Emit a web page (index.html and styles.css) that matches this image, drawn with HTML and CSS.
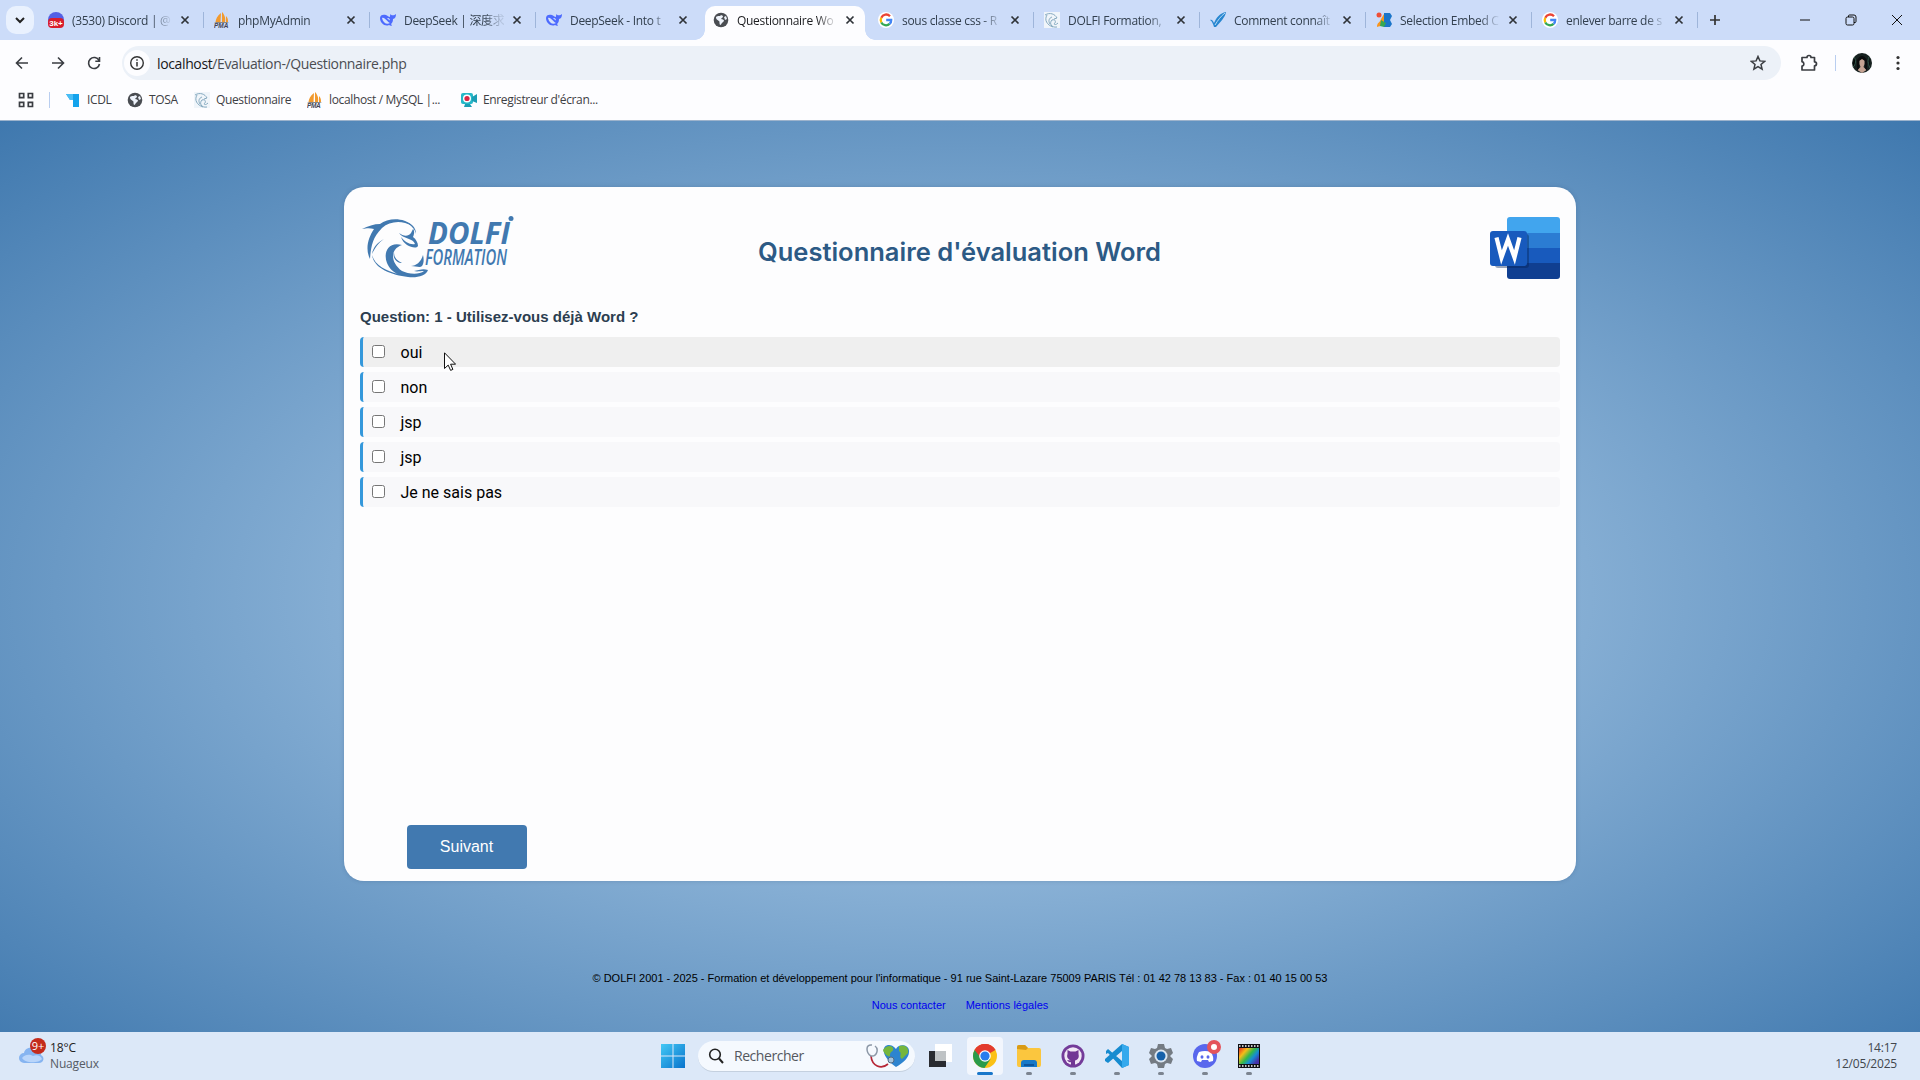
FILE: index.html
```html
<!DOCTYPE html>
<html lang="fr">
<head>
<meta charset="utf-8">
<title>Questionnaire Word</title>
<link rel="stylesheet" href="styles.css">
</head>
<body>
<svg class="defs" width="0" height="0">
  <defs>
    <symbol id="x" viewBox="0 0 10 10"><path d="M1.5 1.5l7 7M8.5 1.5l-7 7" stroke="currentColor" stroke-width="1.7"/></symbol>
    <symbol id="pma" viewBox="0 0 16 16"><path d="M7 1C3 4 2 7 1.500 10h5zM8 0v10h3C12 6 10 2 8 0zM12 4c2 2 2 4 2 6h-2z" fill="#f29a2e"/><path d="M0 10h15l-2 1H2z" fill="#888"/><text x="0" y="16" font-family="Liberation Sans" font-size="6.500" font-weight="700" font-style="italic" fill="#445">PMA</text></symbol>
    <symbol id="whale" viewBox="0 0 16 16"><path d="M0 6c0-3 3-4 6-3 2 1 3 2 4 2 0-1 0-2 .5-3 .5 1 1.500 1.500 2.500 1.300 1 0 2-.3 3-1.300 0 3-1 4.500-3 5 0 3-1 4-2 5l1 1.500c-1 .5-2 .2-3-.5C5 15 0 11 0 6z" fill="#4d6bfe"/><path d="M2 6c3-1 5 4 8 5-3 2-7 0-8-5zM7 6c2-.5 3 1 3 2.500C9 8 8 7 7 6z" fill="#d5e2fb"/></symbol>
    <symbol id="globe" viewBox="0 0 16 16"><circle cx="8" cy="8" r="7.300" fill="#4a4d52"/><path d="M3 5c2-2 4 0 5-2l2 1c0 2-2 2-2 3 2 0 3 1 3 2l-2 2c-1 1-1 2-2 2-1-2 0-3-1-4S3 8 3 5zM11 5l2-1 1 3-2 1z" fill="#eef3fb"/></symbol>
    <symbol id="google" viewBox="0 0 16 16"><circle cx="8" cy="8" r="8" fill="#fff"/><g fill="none" stroke-width="2.300"><path d="M12 4.200A5.300 5.300 0 0 0 3.300 5.700" stroke="#ea4335"/><path d="M3.300 5.700a5.300 5.300 0 0 0 0 4.700" stroke="#fbbc05"/><path d="M3.300 10.400a5.300 5.300 0 0 0 8.300 1.500" stroke="#34a853"/><path d="M11.600 11.900A5 5 0 0 0 13.200 8H8.200" stroke="#4285f4"/></g></symbol>
    <symbol id="dolfin" viewBox="0 0 16 16"><path d="M0 0h16v16H0z" fill="#f0f5fa"/><path d="M1 3c5-3 10-1 12 3l-3 1M3 3c-3 5 0 10 6 12M13 15c-6 1-8-4-5-7 3-1 4 1 3 3-2 1 0 3 3 0M6 12c-2-3-1-6 2-7" fill="none" stroke="#85a9bf"/></symbol>
  </defs>
</svg>

<header class="browser">
  <div class="tabstrip">
    <div class="tabsearch"><svg width="10" height="8" viewBox="0 0 10 8"><path d="M1 2l4 4 4-4" fill="none" stroke="#222" stroke-width="2"/></svg></div>
    <div class="tab"><svg class="fav" viewBox="0 0 16 16"><circle cx="8" cy="8" r="8" fill="#5360e5"/><rect y="6" width="16" height="10" rx="4" fill="#d91d2c"/><text x="8" y="14" text-anchor="middle" font-family="Liberation Sans" font-size="8" font-weight="700" fill="#fff">3k+</text></svg><span>(3530) Discord | @</span><svg class="close"><use href="#x"/></svg></div>
    <div class="tab"><svg class="fav"><use href="#pma"/></svg><span>phpMyAdmin</span><svg class="close"><use href="#x"/></svg></div>
    <div class="tab"><svg class="fav"><use href="#whale"/></svg><span>DeepSeek | 深度求</span><svg class="close"><use href="#x"/></svg></div>
    <div class="tab noline"><svg class="fav"><use href="#whale"/></svg><span>DeepSeek - Into t</span><svg class="close"><use href="#x"/></svg></div>
    <div class="tab active noline"><svg class="fav"><use href="#globe"/></svg><span>Questionnaire Wo</span><svg class="close"><use href="#x"/></svg></div>
    <div class="tab"><svg class="fav"><use href="#google"/></svg><span>sous classe css - R</span><svg class="close"><use href="#x"/></svg></div>
    <div class="tab"><svg class="fav"><use href="#dolfin"/></svg><span>DOLFI Formation,</span><svg class="close"><use href="#x"/></svg></div>
    <div class="tab"><svg class="fav" viewBox="0 0 16 16"><path d="M0 8c2-1 3 1 4 3C6 6 10 1 16 0c-1 6-6 10-10 15H4C3 12 2 9 0 8z" fill="#2786d0"/><path d="M5 13C8 8 11 4 15 1" stroke="#b8dcf5" fill="none"/></svg><span>Comment connaît</span><svg class="close"><use href="#x"/></svg></div>
    <div class="tab"><svg class="fav" viewBox="0 0 16 16"><circle cx="3" cy="3" r="2.500" fill="#ef4e36"/><path d="M1 15c0-5 3-4 4-8l3-5v7c0 4-3 5-7 6z" fill="#f8951d"/><path d="M8 1h6l2 3-2 4 2 4-2 3H8z" fill="#1b75c9"/><path d="M5 8l5 3-2 4-4-1z" fill="#36a852"/></svg><span>Selection Embed C</span><svg class="close"><use href="#x"/></svg></div>
    <div class="tab"><svg class="fav"><use href="#google"/></svg><span>enlever barre de s</span><svg class="close"><use href="#x"/></svg></div>
    <svg class="newtab" viewBox="0 0 12 12"><path d="M6 1v10M1 6h10" stroke="#333" stroke-width="1.700"/></svg>
    <div class="window-buttons">
      <svg viewBox="0 0 12 12"><path d="M1 6h10" stroke="#111"/></svg>
      <svg viewBox="0 0 12 12"><path d="M3.500 3V2q0-1 1-1H9q2 0 2 2v4.500q0 1-1 1H9" fill="none" stroke="#111"/><rect x="1" y="3" width="8" height="8" rx="1.500" fill="none" stroke="#111"/></svg>
      <svg viewBox="0 0 12 12"><path d="M1 1l10 10M11 1L1 11" stroke="#111"/></svg>
    </div>
  </div>
  <div class="toolbar">
    <svg class="nav" viewBox="0 0 16 16"><path d="M14 8H3M8 2.500L2.500 8 8 13.500" /></svg>
    <svg class="nav" viewBox="0 0 16 16"><path d="M2 8h11M8 2.500L13.500 8 8 13.500"/></svg>
    <svg class="nav" viewBox="0 0 16 16"><path d="M13 5.500A5.500 5.500 0 1 0 13.500 9M13.500 2v4.200H9.300"/></svg>
    <div class="url">
      <div class="info"><svg width="16" height="16" viewBox="0 0 16 16"><circle cx="8" cy="8" r="6.300" fill="none" stroke="#333" stroke-width="1.400"/><path d="M8 7v4.500M8 4.300v1.500" stroke="#333" stroke-width="1.500"/></svg></div>
      <p><b>localhost</b>/Evaluation-/Questionnaire.php</p>
      <svg class="star" viewBox="0 0 16 16"><path d="M8 1.500l1.900 4.400 4.800.4L11 9.500l1.100 4.700L8 11.700l-4.100 2.500L5 9.500 1.300 6.300l4.800-.4z" fill="none" stroke="#3a3d42" stroke-width="1.500"/></svg>
    </div>
    <svg class="puzzle" viewBox="0 0 18 18"><path d="M2 3.500h5a2 2 0 0 1 4 0h3.500v4.300a2 2 0 0 1 0 4V16H2v-3.800c2.500-.5 2.500-4 0-4.500z" fill="none" stroke="#3a3d42" stroke-width="1.700" stroke-linejoin="round"/></svg>
    <i class="vline"></i>
    <svg class="avatar" viewBox="0 0 20 20"><circle cx="10" cy="10" r="10" fill="#172120"/><path d="M1 14c3-2 3-8 1-10M17 4c-2 4 0 9 1 11" stroke="#32574a"/><path d="M7.500 7q2.500-3 5 0v4l-1 3 3 3-4.500 3-4.500-3 3-3-1-3z" fill="#c5a393"/><path d="M5 18V7q5-8 10 0v11l-2-3V8l-3-2-3 2v7z" fill="#0c0d0e"/></svg>
    <svg class="dots" viewBox="0 0 4 16"><g fill="#333"><circle cx="2" cy="2.500" r="1.600"/><circle cx="2" cy="8" r="1.600"/><circle cx="2" cy="13.500" r="1.600"/></g></svg>
  </div>
  <nav class="bookmarks">
    <svg class="apps" viewBox="0 0 16 16"><g fill="none" stroke="#3a3d42" stroke-width="1.700"><path d="M1.500 1.500h4.200v4.200H1.500zM10.300 1.500h4.200v4.200h-4.200zM1.500 10.300h4.200v4.200H1.500zM10.300 10.300h4.200v4.200h-4.200z"/></g></svg>
    <i></i>
    <a class="b1"><svg viewBox="0 0 16 16"><path d="M1 2h13v13H8V8H5z" fill="#14a3ec"/><path d="M1 2h7v6H5z" fill="#49bdf5"/></svg><span>ICDL</span></a>
    <a class="b2"><svg><use href="#globe"/></svg><span>TOSA</span></a>
    <a class="b3"><svg><use href="#dolfin"/></svg><span>Questionnaire</span></a>
    <a class="b4"><svg><use href="#pma"/></svg><span>localhost / MySQL |...</span></a>
    <a class="b5"><svg viewBox="0 0 16 16"><rect y="1" width="12" height="11" rx="2" fill="#25b8c8"/><path d="M11 5l5-3v9l-5-2zM4 12h5l2 3H3z" fill="#1b9db4"/><circle cx="6" cy="6.500" r="4" fill="#fff"/><circle cx="6" cy="6.500" r="2.600" fill="#da2645"/></svg><span>Enregistreur d'écran...</span></a>
  </nav>
</header>

<main class="page">
  <section class="card">
    <div class="card-head">
      <svg class="logo" viewBox="0 0 154 66">
        <g fill="#4179b0">
          <path d="M0 14C6 11 12 9 18 9 26 3 42 2 50 11 40 5 28 6 20 13 10 23 9 32 8 44 3 34 6 23 12 14 8 13 5 13 0 14z"/>
          <path d="M10 40c2 14 20 20 36 22 9 1 18-1 20-7-5-2-9 0-14 1 3 1 6 0 10 0-5 4-16 3-22 0C28 47 28 34 40 30 26 26 21 38 25 48c2 5 6 9 11 11C25 56 13 51 10 40z"/>
          <path d="M37 18c4 3 9 4 12 0l2-4c2 2 1 6 0 8 3 2 5 6 5 9-2 3-7 1-11-1-3-2-5-5-6-8 4 5 9 8 14 7-2-6-12-5-16-11z"/>
          <path d="M61 40c-2 7-7 11-12 11 5 0 9 2 11 0 2-3 2-7 1-11zM32 37c0 5 2 8 8 11-5 0-10-5-8-11z"/>
          <path d="M22 24c-6 3-11 8-12 15 3-6 6-11 12-15zM42 6c8 2 12 7 12 13-1-5-5-9-12-13z"/>
        </g>
        <g fill="#4179b0" font-family="Open Sans, sans-serif" font-style="italic">
          <text x="66" y="29" font-size="30" font-weight="700" textLength="82" lengthAdjust="spacingAndGlyphs">DOLFI</text>
          <text x="63" y="50" font-size="22" font-weight="600" textLength="82" lengthAdjust="spacingAndGlyphs">FORMATION</text>
        </g>
        <circle cx="149" cy="3.500" r="2.500" fill="#4179b0"/>
      </svg>
      <h1><svg width="404" height="40" viewBox="0 0 404 40"><text x="0" y="29" textLength="403" lengthAdjust="spacingAndGlyphs">Questionnaire d'évaluation Word</text></svg></h1>
      <svg class="word" viewBox="0 0 70 62">
        <clipPath id="doc"><rect x="17" width="53" height="62" rx="3"/></clipPath>
        <g clip-path="url(#doc)"><path d="M17 0h53v16H17z" fill="#41a5ee"/><path d="M17 16h53v15H17z" fill="#2b7cd3"/><path d="M17 31h53v15H17z" fill="#185abd"/><path d="M17 46h53v16H17z" fill="#103f91"/></g>
        <rect x="5" y="17" width="34" height="34" rx="3" fill="#062455" opacity=".4"/>
        <rect y="14" width="37" height="35" rx="3" fill="#185abd"/>
        <path d="M6.500 20.500l5 20 6.500-18 6.500 18 5-20" fill="none" stroke="#fff" stroke-width="4.200"/>
      </svg>
    </div>
    <h2>Question: 1 - Utilisez-vous déjà Word ?</h2>
    <div class="answers">
      <label class="hover"><input type="checkbox"><span>oui</span></label>
      <label><input type="checkbox"><span>non</span></label>
      <label><input type="checkbox"><span>jsp</span></label>
      <label><input type="checkbox"><span>jsp</span></label>
      <label><input type="checkbox"><span>Je ne sais pas</span></label>
    </div>
    <button>Suivant</button>
  </section>
  <footer>
    <p>© DOLFI 2001 - 2025 - Formation et développement pour l'informatique - 91 rue Saint-Lazare 75009 PARIS Tél : 01 42 78 13 83 - Fax : 01 40 15 00 53</p>
    <div><a>Nous contacter</a><a>Mentions légales</a></div>
  </footer>
</main>

<div class="taskbar">
  <div class="weather">
    <svg width="28" height="28" viewBox="0 0 28 28"><path d="M5 25a5 5 0 0 1 0-10c1-6 10-7 12-2 4 0 5 2 5 4 4 2 3 8-2 8z" fill="#86b4f0"/><path d="M3 20c3-4 8-4 11-2 4-2 8 0 9 3-3 4-16 5-20-1z" fill="#b9d5fa"/><circle cx="19" cy="8" r="8" fill="#c42b1c"/><text x="19" y="12" text-anchor="middle" font-family="Open Sans" font-size="11" fill="#fff">9+</text></svg>
    <p>18°C<br><span>Nuageux</span></p>
  </div>
  <div class="dock">
    <svg class="start" viewBox="0 0 24 24"><defs><linearGradient id="win" x2="1" y2="1"><stop stop-color="#43c8f5"/><stop offset="1" stop-color="#0873cc"/></linearGradient></defs><path d="M0 0h11.500v11.500H0zM12.500 0H24v11.500H12.500zM0 12.500h11.500V24H0zM12.500 12.500H24V24H12.500z" fill="url(#win)"/></svg>
    <div class="search">
      <svg width="16" height="16" viewBox="0 0 16 16"><circle cx="7" cy="6.500" r="5.300" fill="none" stroke="#222" stroke-width="1.600"/><path d="M11 10.500l4 4.500" stroke="#222" stroke-width="2"/></svg>
      <span>Rechercher</span>
      <svg width="44" height="24" viewBox="0 0 44 24"><path d="M30 23C15 13 15 1 23 1c4 0 6 3 7 4 2-6 14-5 13 3 0 6-6 11-13 15z" fill="#2d84cf"/><path d="M17 6c3-5 9-5 10-2 1 4-3 3-3 7s-6-1-7-5zM33 2c6-2 10 1 9 7l-6 6c-4-3 1-5-3-8z" fill="#75b63c"/><path d="M5 12c1 10 10 14 17 8" fill="none" stroke="#b62736" stroke-width="1.700"/><path d="M6 1C-1 0 0 9 5 12c6 1 8-7 4-10" fill="none" stroke="#8c98a7" stroke-width="1.500"/><circle cx="25" cy="16" r="3" fill="#a5c4dc" stroke="#526b85"/></svg>
    </div>
    <svg class="taskview" viewBox="0 0 24 24"><path d="M7 0h17v18H7z" fill="#fff"/><path d="M1 7h17v16H1z" fill="#292b30"/><path d="M7 7h11v10H7z" fill="#bfc3c5"/></svg>
    <div class="app on"><svg viewBox="0 0 24 24"><circle cx="12" cy="12" r="12" fill="#fbc116"/><path d="M12 12L1.600 6a12 12 0 0 1 20.800 0z" fill="#e33b2e"/><path d="M12 12L1.600 6A12 12 0 0 0 11.500 24l6-9z" fill="#2a9b4b"/><path d="M1.600 6A12 12 0 0 1 22.400 6H12L8 14z" fill="#e33b2e"/><circle cx="12" cy="12" r="5.800" fill="#fff"/><circle cx="12" cy="12" r="4.600" fill="#287ced"/></svg></div>
    <div class="app"><svg viewBox="0 0 24 24"><path d="M0 3q0-2 2-2h6l3 3h11q2 0 2 2v15q0 2-2 2H2q-2 0-2-2z" fill="#fbc63e"/><path d="M0 5V3q0-2 2-2h6l3 3-2 2z" fill="#d99b16"/><path d="M4 23v-4q0-3 3-3h10q3 0 3 3v4z" fill="#1879c7"/><path d="M7 20h10v2H7z" fill="#0d559c"/></svg></div>
    <div class="app"><svg viewBox="0 0 24 24"><circle cx="12" cy="12" r="11.500" fill="#733b99"/><circle cx="12" cy="12" r="8.700" fill="#f1e7f5"/><path d="M6.500 6l3 1.500h5l3-1.500v4c1 4-1 6-3.500 6.500V21h-4v-3c-2 1-3-1-4-2l4 .5C6.500 15 5.500 13 6.500 10z" fill="#713694"/></svg></div>
    <div class="app"><svg viewBox="0 0 24 24"><path d="M17 0l7 3v18l-7 3L3 9l-2 1V7l2-2 14 12V7L3 19l-3-2v-2z" fill="#168bd0"/><path d="M17 0l7 3v18l-7 3z" fill="#35a9ed"/></svg></div>
    <div class="app"><svg viewBox="0 0 24 24"><path d="M9 0h6l1 4 2 1 4-1 2 5-3 3 3 3-2 5-4-1-2 1-1 4H9l-1-4-2-1-4 1-2-5 3-3-3-3 2-5 4 1 2-1z" fill="#747b83"/><circle cx="12" cy="12" r="6.500" fill="#dbe6f2"/><circle cx="12" cy="12" r="4.500" fill="#1661aa"/></svg></div>
    <div class="app"><svg viewBox="0 0 24 24"><circle cx="12" cy="12" r="12" fill="#5967ed"/><path d="M6 8q6-2 12 0 3 5 2 9l-4 1-1-2H9l-1 2-4-1q-1-4 2-9z" fill="#fff"/><ellipse cx="9" cy="13" rx="1.500" ry="1.800" fill="#5967ed"/><ellipse cx="15" cy="13" rx="1.500" ry="1.800" fill="#5967ed"/></svg><b></b></div>
    <div class="app"><svg viewBox="0 0 24 24"><defs><linearGradient id="rb" x2="1" y2=".7"><stop stop-color="#e62a1d"/><stop offset=".3" stop-color="#f5bd18"/><stop offset=".55" stop-color="#34b949"/><stop offset=".75" stop-color="#158dd5"/><stop offset="1" stop-color="#4630a9"/></linearGradient></defs><path d="M1 0h22v24H1z" fill="#101014"/><path d="M2 4h20v16H2z" fill="url(#rb)"/><path d="M2 2h20M2 22h20" stroke="#fff" stroke-width="1.500" stroke-dasharray="1.500 1.500"/></svg></div>
  </div>
  <div class="clock">14:17<br>12/05/2025</div>
</div>
<svg class="cursor" viewBox="0 0 12 19"><path d="M.5.8v15.700l3.700-3.400 2.400 5.300 2.300-1-2.300-5.200h5z" fill="#fff" stroke="#111"/></svg>
</body>
</html>
```
FILE: styles.css
```css
* { box-sizing: border-box; }
body {
  margin: 0;
  width: 1920px;
  height: 1080px;
  overflow: hidden;
  display: flex;
  flex-direction: column;
  font-family: "Open Sans", "Noto Sans CJK SC", sans-serif;
}
p, h1, h2 { margin: 0; }
svg { display: block; flex: none; }
.defs { position: absolute; }

/* Browser chrome */
.browser { height: 121px; background: #fdfdff; flex: none; border-bottom: 1px solid #9db3cc; }
.tabstrip { height: 40px; background: #ccdcf9; display: flex; align-items: center; padding-left: 6px; }
.tabsearch { width: 28px; height: 28px; border-radius: 10px; background: #e9f1fe; display: grid; place-items: center; margin-right: 6px; }
.tab { width: 166px; flex: none; height: 34px; margin-top: 6px; padding: 0 0 6px 8px; display: flex; align-items: center; position: relative; color: #33404f; }
.tab::after { content: ""; width: 1px; height: 16px; background: #9eb5da; margin-left: 13px; }
.tab.noline::after { display: none; }
.fav { width: 16px; height: 16px; }
.tab span {
  flex: none;
  font-size: 12px;
  letter-spacing: -0.3px;
  white-space: nowrap;
  width: 100px;
  margin: 0 8px;
  mask-image: linear-gradient(90deg, #000 80%, rgba(0, 0, 0, .15) 97%);
}
.close { width: 10px; height: 10px; color: #2f3338; }
.tab.active { color: #1c1d20; background: #fdfdff; border-radius: 10px 10px 0 0; width: 160px; margin-left: 1px; margin-right: 5px; }
.tab.active::before {
  content: "";
  position: absolute;
  left: -10px;
  right: -10px;
  bottom: 0;
  height: 10px;
  background:
    radial-gradient(circle at 0 0, transparent 9.500px, #fdfdff 10px) left / 10px 10px no-repeat,
    radial-gradient(circle at 100% 0, transparent 9.500px, #fdfdff 10px) right / 10px 10px no-repeat;
}
.newtab { width: 12px; height: 12px; margin-left: 9px; }
.window-buttons { margin-left: auto; display: flex; gap: 34px; padding-right: 17px; }
.window-buttons svg { width: 12px; height: 12px; }

.toolbar { height: 46px; display: flex; align-items: center; padding-left: 14px; }
.nav { width: 16px; height: 16px; margin-right: 20px; fill: none; stroke: #3a3d42; stroke-width: 1.6; }
.url { width: 1659px; height: 34px; border-radius: 17px; background: #ecf1f8; display: flex; align-items: center; padding: 0 15px 0 2px; }
.info { width: 26px; height: 26px; border-radius: 13px; background: #fdfdff; display: grid; place-items: center; margin-right: 7px; }
.url p { font-size: 14px; letter-spacing: -0.37px; color: #4a4d52; }
.url b { font-weight: 400; color: #17181a; }
.star { width: 16px; height: 16px; margin-left: auto; }
.puzzle { width: 18px; height: 18px; margin-left: 19px; }
.vline { width: 1px; height: 16px; background: #b9cef0; margin-left: 17px; }
.avatar { width: 20px; height: 20px; margin-left: 16px; }
.dots { width: 4px; height: 16px; margin-left: 24px; }

.bookmarks { height: 27px; display: flex; align-items: center; padding-left: 18px; font-size: 12px; color: #3d4044; }
.bookmarks > i { width: 1px; height: 16px; background: #b9cef0; margin: 0 15px 0 15px; }
.bookmarks svg { width: 16px; height: 16px; }
.bookmarks a { display: flex; gap: 6px; align-items: center; letter-spacing: -0.36px; white-space: nowrap; }
.b1 { width: 62px; }
.b2 { width: 67px; }
.b3 { width: 113px; }
.b4 { width: 154px; }

/* Page */
.page {
  height: 911px;
  flex: none;
  padding-top: 66px;
  display: flex;
  flex-direction: column;
  align-items: center;
  background: radial-gradient(ellipse at 50% 52%, #c0dbf3, #3f78ae);
}
.card {
  width: 1232px;
  height: 694px;
  border-radius: 20px;
  background: #fdfdfe;
  padding: 29px 16px 12px;
  display: flex;
  flex-direction: column;
  box-shadow: 0 0 4px rgba(40, 70, 110, .25);
}
.card-head { display: flex; justify-content: space-between; height: 91px; }
.logo { width: 154px; height: 66px; margin-left: 2px; margin-top: -1px; }
h1 { height: 40px; margin: 16px 0 0 -86px; }
h1 text { font: 600 25px "Inter", sans-serif; fill: #2c5a85; }
.word { width: 70px; height: 62px; margin-top: 1px; }
h2 { font: 700 15px/20px "Liberation Sans", Arial, sans-serif; letter-spacing: 0.01px; color: #2c3e50; height: 30px; }
.answers { display: flex; flex-direction: column; gap: 5px; }
.answers label {
  height: 30px;
  border-left: 3px solid #3498db;
  border-radius: 4px;
  background: #f8f8fa;
  display: flex;
  align-items: center;
  padding-left: 9px;
  font: 16px Roboto, sans-serif;
  color: #000;
}
.answers label.hover { background: #efefef; }
.answers input { width: 13px; height: 13px; margin: 0 15.500px 2px 0; }
.card button {
  margin: auto 0 0 46.500px;
  width: 120px;
  height: 44px;
  border: 0;
  border-radius: 4px;
  background: #4179b0;
  color: #fff;
  font: 16px "Liberation Sans", Arial, sans-serif;
}
footer { margin-top: 90px; text-align: center; font: 11px/14px "Liberation Sans", Arial, sans-serif; color: #000; }
footer p { white-space: nowrap; }
footer div { display: flex; justify-content: center; gap: 20px; margin-top: 13px; color: #0000ee; }

/* Taskbar */
.taskbar { height: 48px; background: #dce8f8; display: flex; align-items: center; position: relative; }
.weather { display: flex; align-items: center; padding-left: 19px; gap: 3px; line-height: 16px; color: #222; width: 661px; }
.weather svg { margin-top: -9px; }
.weather p { font-size: 12px; letter-spacing: -0.15px; }
.weather span { color: #555b65; }
.dock { display: flex; align-items: center; }
.start { width: 24px; height: 24px; margin-right: 13px; }
.search { width: 217px; height: 31px; border-radius: 16px; background: #f5f9fe; border-bottom: 1px solid #c4d0df; display: flex; align-items: center; padding: 0 5px 0 10px; }
.search span { font-size: 14px; letter-spacing: -0.45px; color: #54585f; margin-left: 10px; margin-right: auto; }
.taskview { width: 24px; height: 24px; margin: 0 15px 0 13px; }
.app { width: 36px; height: 38px; margin-right: 8px; border-radius: 4px; display: flex; justify-content: center; align-items: center; position: relative; }
.app svg { width: 24px; height: 24px; }
.app::after { content: ""; position: absolute; bottom: 0; left: 15px; width: 6px; height: 3px; border-radius: 2px; background: #7c8490; }
.app.on { background: #f2f6fd; }
.app.on::after { left: 10px; width: 16px; background: #1876ca; }
.app b { position: absolute; top: 3px; right: 2px; width: 14px; height: 14px; border-radius: 50%; border: 4px solid #e4545b; background: #fff; }
.clock { margin-left: auto; padding-right: 23px; text-align: right; font-size: 12px; line-height: 16px; color: #41464d; letter-spacing: -0.2px; }
.cursor { position: absolute; left: 444px; top: 352px; width: 12px; height: 19px; }
```
